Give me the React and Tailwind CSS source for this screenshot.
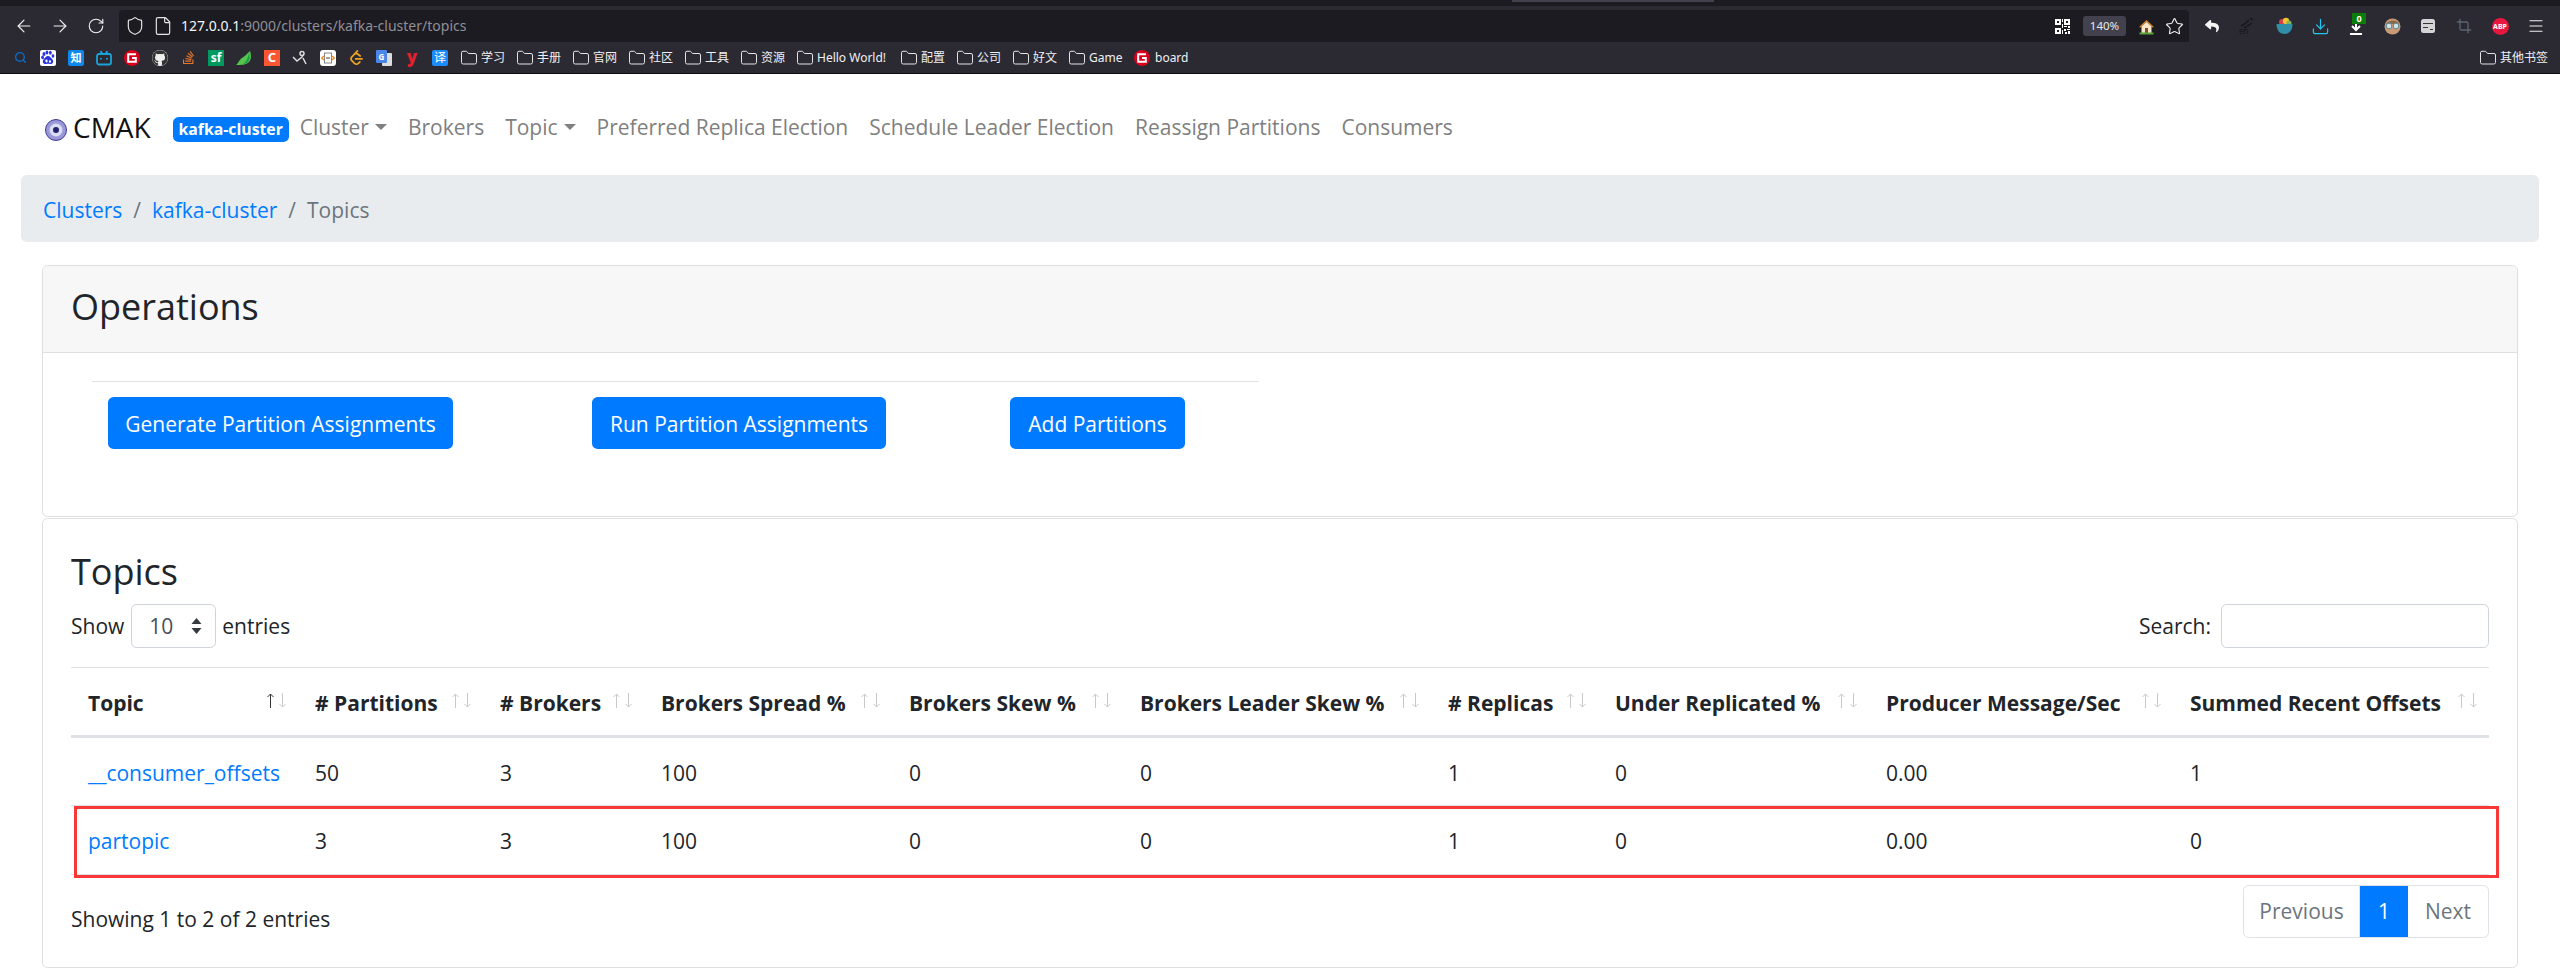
import React from "react";
import { ArrowLeft, ArrowRight, RotateCw, Shield, File, Star, Folder, Search, Download, Crop, Menu } from "lucide-react";
import { FaGithub, FaStackOverflow, FaReply } from "react-icons/fa";
import { SiLeetcode } from "react-icons/si";

const FONT = "[font-family:'Open_Sans','Noto_Sans_CJK_SC',sans-serif]";
const UI = "[font-family:'Noto_Sans','Noto_Sans_CJK_SC',sans-serif]";

function Box({ className, children }) {
  return <span className={"w-[16px] h-[16px] flex items-center justify-center shrink-0 " + className}>{children}</span>;
}

function GLogo() {
  return (
    <span className="w-[16px] h-[16px] rounded-full bg-[#d9001b] flex items-center justify-center shrink-0">
      <svg width="10" height="10" viewBox="0 0 10 10" fill="none" stroke="#fff" strokeWidth="2"><path d="M9 1.2H1.2v7.6H8.8V5H5" /></svg>
    </span>
  );
}

function SiteIcons() {
  return (
    <div className="flex items-center gap-[12px] pl-[12px]">
      <Box><Search size={13} color="#0a6cc4" strokeWidth={2.6} /></Box>
      <Box className="bg-white rounded-[2px]">
        <svg width="16" height="16" viewBox="0 0 16 16" fill="#2932e1"><ellipse cx="4" cy="4" rx="1.5" ry="2" /><ellipse cx="7" cy="2.6" rx="1.4" ry="2" /><ellipse cx="10.4" cy="2.8" rx="1.4" ry="2" /><ellipse cx="13" cy="6" rx="1.4" ry="1.8" /><ellipse cx="2.6" cy="7.4" rx="1.4" ry="1.8" /><path d="M8 6c2 0 3 2 4.500 3.500 1.500 2 .5 5-2.500 4.500-1.500-.3-2.500-.3-4 0-3 .5-4-2.500-2.500-4.500C5 8 6 6 8 6z" /><ellipse cx="6.500" cy="11" rx="1.200" ry="1.400" fill="#fff" /><ellipse cx="10" cy="11.500" rx="1.100" ry="1.300" fill="#fff" /></svg>
      </Box>
      <Box className="bg-[#0f88eb] rounded-[2px] text-white text-[11px] font-bold leading-none">知</Box>
      <Box>
        <svg width="16" height="16" viewBox="0 0 16 16" fill="none" stroke="#1ba3d8" strokeWidth="1.800"><rect x="1" y="4" width="14" height="10.500" rx="2" /><path d="M4.500 1l2 3M11.500 1l-2 3M5 8v1.500M11 8v1.500" /></svg>
      </Box>
      <GLogo />
      <Box className="bg-[#efefef] rounded-full"><FaGithub size={16} color="#333" /></Box>
      <Box><FaStackOverflow size={15} color="#e2762c" /></Box>
      <Box className="bg-[#009a61] text-white text-[12px] font-bold leading-none">sf</Box>
      <Box>
        <svg width="16" height="16" viewBox="0 0 16 16"><path d="M0 15c2-1 3-5 6-7 3-2 5-4 8-7 1 3 2 8-1 11-3 3-8 3-13 3z" fill="#56c54c" /><path d="M13 3c1 3 1 7-1 9-1 1-3 2-5 2 3-2 5-6 6-11z" fill="#1f9d46" /></svg>
      </Box>
      <Box className="bg-[#fc5531] text-white text-[13px] font-bold leading-none">C</Box>
      <Box>
        <svg width="16" height="16" viewBox="0 0 16 16" fill="none" stroke="#ddd" strokeWidth="1.500"><circle cx="10" cy="3.500" r="2" /><path d="M1 7l4 4 5-4 1-2M11 8l3 6" /></svg>
      </Box>
      <Box className="bg-white rounded-[3px]">
        <svg width="14" height="14" viewBox="0 0 14 14" fill="none"><rect x="3.500" y="2" width="7" height="10" stroke="#888" strokeWidth="1" /><path d="M3 5L0.800 7 3 9M11 5l2.200 2L11 9" stroke="#f2871e" strokeWidth="1.400" /><path d="M5 7h4" stroke="#666" strokeWidth="1.200" /></svg>
      </Box>
      <Box><SiLeetcode size={15} color="#f0a31f" /></Box>
      <Box className="relative">
        <span className="absolute left-[6px] top-[3px] w-[10px] h-[13px] bg-[#ddd] rounded-[1px]" />
        <span className="absolute left-0 top-0 w-[11px] h-[13px] bg-[#4a86e8] rounded-[1px] text-white text-[8px] font-bold leading-[13px] text-center">G</span>
      </Box>
      <Box className="text-[#e0202c] text-[17px] font-black leading-none pb-[3px]">y</Box>
      <Box className="bg-[#1a8cff] rounded-[2px] text-white text-[12px] leading-none">译</Box>
    </div>
  );
}

function FolderMark({ label, w }) {
  return (
    <div className={"flex items-center gap-[3px] shrink-0 " + w}>
      <Folder size={18} color="#e8e8ea" strokeWidth={1.300} className="shrink-0 -ml-[1px]" />
      <span className="text-[12px] leading-none text-[#f0f0f2] whitespace-nowrap">{label}</span>
    </div>
  );
}

function BrowserChrome() {
  const Tool = ({ children }) => <div className="w-[36px] flex items-center justify-center shrink-0">{children}</div>;
  return (
    <div className={"shrink-0 " + UI}>
      <div className="h-[6px] bg-[#1c1b22] pl-[1512px]">
        <div className="w-[202px] h-[2px] bg-[#42414d]" />
      </div>
      <div className="h-[36px] bg-[#2b2a33] flex items-start pl-[6px]">
        <div className="flex h-[36px] shrink-0 pt-[4px]">
          <Tool><ArrowLeft size={20} color="#f2f2f2" strokeWidth={1.400} /></Tool>
          <Tool><ArrowRight size={20} color="#f2f2f2" strokeWidth={1.400} /></Tool>
          <Tool><RotateCw size={18} color="#f2f2f2" strokeWidth={1.500} /></Tool>
        </div>
        <div className="ml-[5px] mt-[4px] h-[32px] flex-1 bg-[#1c1b22] rounded-t-[4px] flex items-center pl-[6px] pr-[5px]">
          <Shield size={20} color="#e6e6e6" strokeWidth={1.400} />
          <File size={20} color="#e6e6e6" strokeWidth={1.400} className="ml-[8px]" />
          <span className="ml-[8px] text-[14px] leading-none text-[#8f8f96]"><span className="text-[#f4f4f6]">127.0.0.1</span>:9000/clusters/kafka-cluster/topics</span>
          <div className="flex-1" />
          <svg width="15" height="15" viewBox="0 0 15 15" fill="#fff"><path d="M0 0h6v6H0zM9 0h6v6H9zM0 9h6v6H0zM2 2v2h2V2zM11 2v2h2V2zM2 11v2h2v-2zM7 0h1v3H7zM7 5h1v4H7zM9 7h3v1H9zM13 7h2v2h-2zM9 10h2v2H9zM12 10h3v1h-3zM7 11h1v4H7zM10 13h2v2h-2zM13 12h2v3h-2z" fillRule="evenodd" /></svg>
          <span className="ml-[13px] w-[43px] h-[20px] rounded-[3px] bg-[#42414d] text-[#e8e8ea] text-[11.500px] flex items-center justify-center">140%</span>
          <svg className="ml-[12px]" width="17" height="17" viewBox="0 0 17 17"><path d="M1 9l7.500-7L16 9l-1.500.5L8.500 4l-6 5.500z" fill="#d9822b" /><path d="M3.500 8.500l5-4.500 5 4.500V15h-10z" fill="#f4e6c8" /><rect x="7" y="10" width="3" height="5" fill="#7a5230" /><rect x="1.500" y="14.500" width="14" height="2" fill="#5aa63a" /></svg>
          <Star size={19} color="#f2f2f2" strokeWidth={1.400} className="ml-[10px]" />
        </div>
        <div className="w-[5px] shrink-0" />
        <div className="flex h-[36px] pr-[6px] shrink-0 pt-[4px]">
          <Tool><FaReply size={14} color="#f5f5f5" /></Tool>
          <Tool>
            <svg width="18" height="18" viewBox="0 0 18 18" fill="none" stroke="#15151a" strokeWidth="1.500"><path d="M2 9c3-1 5-3 8-6M5 11c3-1 5-3 8-5M11 1l3 2" /><text x="0" y="17" fontSize="8" fill="#15151a" stroke="none">en</text></svg>
          </Tool>
          <Tool>
            <svg width="17" height="18" viewBox="0 0 17 18"><circle cx="6" cy="5" r="3" fill="#d5404a" /><circle cx="10" cy="4" r="3.200" fill="#f3c232" /><circle cx="13" cy="6" r="2.500" fill="#7bb661" /><path d="M0.500 7h16c0 6-3 10-8 10S.5 13 .5 7z" fill="#2f8fa8" /></svg>
          </Tool>
          <Tool><Download size={19} color="#1ec8f0" strokeWidth={1.500} /></Tool>
          <Tool>
            <div className="relative w-[16px] h-[16px]">
              <svg width="16" height="18" viewBox="0 0 16 18" fill="none" stroke="#fff" strokeWidth="2"><path d="M8 1v10M4 8l4 4 4-4M2 16h12" /></svg>
              <span className="absolute left-[4px] top-[-5px] w-[14px] h-[11px] bg-[#0a7d0a] text-white text-[9px] font-bold leading-[11px] text-center">0</span>
            </div>
          </Tool>
          <Tool>
            <svg width="17" height="17" viewBox="0 0 17 17"><circle cx="8.500" cy="8.500" r="8" fill="#c99a76" /><path d="M2 6c2-4 11-5 13 0z" fill="#8a6a4a" /><circle cx="5" cy="8" r="2.800" fill="#d5e3e6" stroke="#5d8a94" /><circle cx="12" cy="8" r="2.800" fill="#d5e3e6" stroke="#5d8a94" /></svg>
          </Tool>
          <Tool>
            <svg width="14" height="14" viewBox="0 0 14 14"><rect width="14" height="14" rx="2.500" fill="#d4d4d6" /><path d="M2 4h10v1H2zM2 8h5v1H2zM9 10h3v1H9z" fill="#333" /></svg>
          </Tool>
          <Tool><Crop size={16} color="#5b6470" strokeWidth={2} /></Tool>
          <Tool>
            <span className="w-[17px] h-[17px] rounded-full bg-[#e8173f] text-white text-[7px] font-bold leading-none flex items-center justify-center">ABP</span>
          </Tool>
          <Tool><Menu size={18} color="#f2f2f2" strokeWidth={1.500} /></Tool>
        </div>
      </div>
      <div className="h-[32px] bg-[#2b2a33] flex items-center border-b border-[#0c0c0d]">
        <SiteIcons />
        <div className="flex items-center ml-[13px]">
          {["学习", "手册", "官网", "社区", "工具", "资源"].map((t) => <FolderMark key={t} label={t} w="w-[56px]" />)}
          <FolderMark label="Hello World!" w="w-[104px]" />
          {["配置", "公司", "好文"].map((t) => <FolderMark key={t} label={t} w="w-[56px]" />)}
          <FolderMark label="Game" w="w-[65px]" />
          <div className="flex items-center gap-[5px]">
            <GLogo />
            <span className="text-[12px] leading-none text-[#f0f0f2]">board</span>
          </div>
        </div>
        <div className="flex-1" />
        <div className="pr-[12px]"><FolderMark label="其他书签" w="" /></div>
      </div>
    </div>
  );
}

function Caret() {
  return <span className="inline-block ml-[6px] align-middle w-0 h-0 border-x-[6px] border-x-transparent border-t-[6px] border-t-[#808080] mb-[3px]" />;
}

function Navbar() {
  const links = [["Cluster", true], ["Brokers"], ["Topic", true], ["Preferred Replica Election"], ["Schedule Leader Election"], ["Reassign Partitions"], ["Consumers"]];
  return (
    <nav className="h-[101px] shrink-0 flex items-center pl-[45px] pt-[5px]">
      <svg width="22" height="22" viewBox="0 0 22 22" className="shrink-0 mt-[5px]">
        <circle cx="11" cy="11" r="10.500" fill="#9a98d8" stroke="#3c3a92" />
        <circle cx="11" cy="11" r="6.500" fill="#dcdcf2" />
        <circle cx="11" cy="11" r="3" fill="#23226e" />
      </svg>
      <span className="ml-[6px] text-[28px] leading-none text-[#111]">CMAK</span>
      <span className="ml-[22px] mt-[5px] w-[116px] h-[25px] rounded-[5.600px] bg-[#007bff] text-white text-[15.800px] font-bold leading-none flex items-center justify-center">kafka-cluster</span>
      <div className="flex items-center ml-[11px] gap-[21px] text-[21px] leading-none text-[#808080]">
        {links.map(([t, c]) => <span key={t} className="whitespace-nowrap">{t}{c && <Caret />}</span>)}
      </div>
    </nav>
  );
}

function Breadcrumb() {
  return (
    <div className="ml-[21px] mr-[21px] h-[67px] shrink-0 bg-[#e9ecef] rounded-[5.600px] flex items-center pl-[22px] pt-[4px] text-[21px] leading-none">
      <span className="text-[#007bff]">Clusters</span>
      <span className="text-[#6c757d] mx-[11px]">/</span>
      <span className="text-[#007bff]">kafka-cluster</span>
      <span className="text-[#6c757d] mx-[11px]">/</span>
      <span className="text-[#6c757d]">Topics</span>
    </div>
  );
}

function Btn({ w, ml, children }) {
  return <div className={"h-[52px] rounded-[5.600px] bg-[#007bff] text-white text-[21px] leading-none pt-[2px] flex items-center justify-center whitespace-nowrap " + w + " " + ml}>{children}</div>;
}

function Operations() {
  return (
    <section className="mt-[23px] mx-[42px] h-[252px] shrink-0 border border-[#dfdfdf] rounded-[5.600px] overflow-hidden">
      <div className="h-[87px] bg-[#f7f7f7] border-b border-[#dfdfdf] flex items-center pl-[28px] pb-[5px] text-[36px] leading-none text-[#212529]">Operations</div>
      <div className="pl-[49px] pt-[28px]">
        <div className="w-[1167px] h-px bg-[#e2e2e2]" />
        <div className="flex mt-[15px] pl-[16px]">
          <Btn w="w-[345px]" ml="">Generate Partition Assignments</Btn>
          <Btn w="w-[294px]" ml="ml-[139px]">Run Partition Assignments</Btn>
          <Btn w="w-[175px]" ml="ml-[124px]">Add Partitions</Btn>
        </div>
      </div>
    </section>
  );
}

function SortArrows({ active }) {
  return (
    <span className="absolute right-[12px] top-[25px] flex gap-[5px]">
      <svg width="7" height="15" viewBox="0 0 7 15" fill="none" stroke={active ? "#333" : "#c9c9c9"} strokeWidth="1"><path d="M3.500 15V1M.5 4l3-3 3 3" /></svg>
      <svg width="7" height="15" viewBox="0 0 7 15" fill="none" stroke="#c9c9c9" strokeWidth="1"><path d="M3.500 0v14M.5 11l3 3 3-3" /></svg>
    </span>
  );
}

const heads = [["Topic", 227], ["# Partitions", 185], ["# Brokers", 161], ["Brokers Spread %", 248], ["Brokers Skew %", 231], ["Brokers Leader Skew %", 308], ["# Replicas", 167], ["Under Replicated %", 271], ["Producer Message/Sec", 304], ["Summed Recent Offsets", 316]];
const rows = [
  ["__consumer_offsets", "50", "3", "100", "0", "0", "1", "0", "0.00", "1"],
  ["partopic", "3", "3", "100", "0", "0", "1", "0", "0.00", "0"],
];

function TopicsTable() {
  return (
    <div className="relative mt-[19px]">
      <table className="w-full table-fixed border-collapse text-[21px] text-[#212529]">
        <colgroup>{heads.map(([h, w]) => <col key={h} style={{ width: w }} />)}</colgroup>
        <thead>
          <tr className="h-[69px] border-t border-b-[3px] border-t-[#dee2e6] border-b-[#dee2e6]">
            {heads.map(([h], i) => (
              <th key={h} className="relative pl-[17px] pt-[3px] text-left font-bold whitespace-nowrap leading-none">
                {h}
                <SortArrows active={i === 0} />
              </th>
            ))}
          </tr>
        </thead>
        <tbody>
          {rows.map((r, ri) => (
            <tr key={r[0]} className={"border-b border-[#dee2e6] " + (ri === 0 ? "h-[69px]" : "h-[69px]")}>
              {r.map((c, i) => (
                <td key={i} className={"pl-[17px] pt-[3px] leading-none " + (i === 0 ? "text-[#007bff]" : "")}>{c}</td>
              ))}
            </tr>
          ))}
        </tbody>
      </table>
      <div className="absolute left-[3px] top-[139px] w-[2425px] h-[72px] border-[3px] border-[#f83737]" />
    </div>
  );
}

function TopicsCard() {
  return (
    <section className="mx-[42px] mt-px h-[450px] shrink-0 border border-[#dfdfdf] rounded-[5.600px] px-[28px] pt-[29px] text-[#212529]">
      <h3 className="text-[36px] leading-[47px] font-normal">Topics</h3>
      <div className="flex items-center justify-between mt-[9px] h-[44px] text-[21px] leading-none">
        <div className="flex items-center">
          <span>Show</span>
          <div className="ml-[7px] w-[85px] h-[44px] border border-[#ced4da] rounded-[5.600px] flex items-center pl-[17px] text-[#495057]">
            <span>10</span>
            <svg className="ml-[17px]" width="13" height="18" viewBox="0 0 13 18" fill="#343a40"><path d="M6.500 1L11.500 7h-10zM6.500 17l5-6h-10z" /></svg>
          </div>
          <span className="ml-[6px]">entries</span>
        </div>
        <div className="flex items-center">
          <span>Search:</span>
          <div className="ml-[10px] w-[268px] h-[44px] border border-[#ced4da] rounded-[5.600px]" />
        </div>
      </div>
      <TopicsTable />
      <div className="flex items-start justify-between text-[21px] leading-none mt-[10px]">
        <span className="mt-[24px]">Showing 1 to 2 of 2 entries</span>
        <div className="flex h-[53px] rounded-[5.600px] border border-[#dee2e6] overflow-hidden">
          <span className="w-[116px] flex items-center justify-center text-[#6c757d] border-r border-[#dee2e6]">Previous</span>
          <span className="w-[48px] flex items-center justify-center bg-[#007bff] text-white">1</span>
          <span className="w-[80px] flex items-center justify-center text-[#6c757d]">Next</span>
        </div>
      </div>
    </section>
  );
}

export default function App() {
  return (
    <div className={"w-[2560px] h-[979px] overflow-hidden bg-white flex flex-col " + FONT}>
      <BrowserChrome />
      <Navbar />
      <Breadcrumb />
      <Operations />
      <TopicsCard />
    </div>
  );
}
